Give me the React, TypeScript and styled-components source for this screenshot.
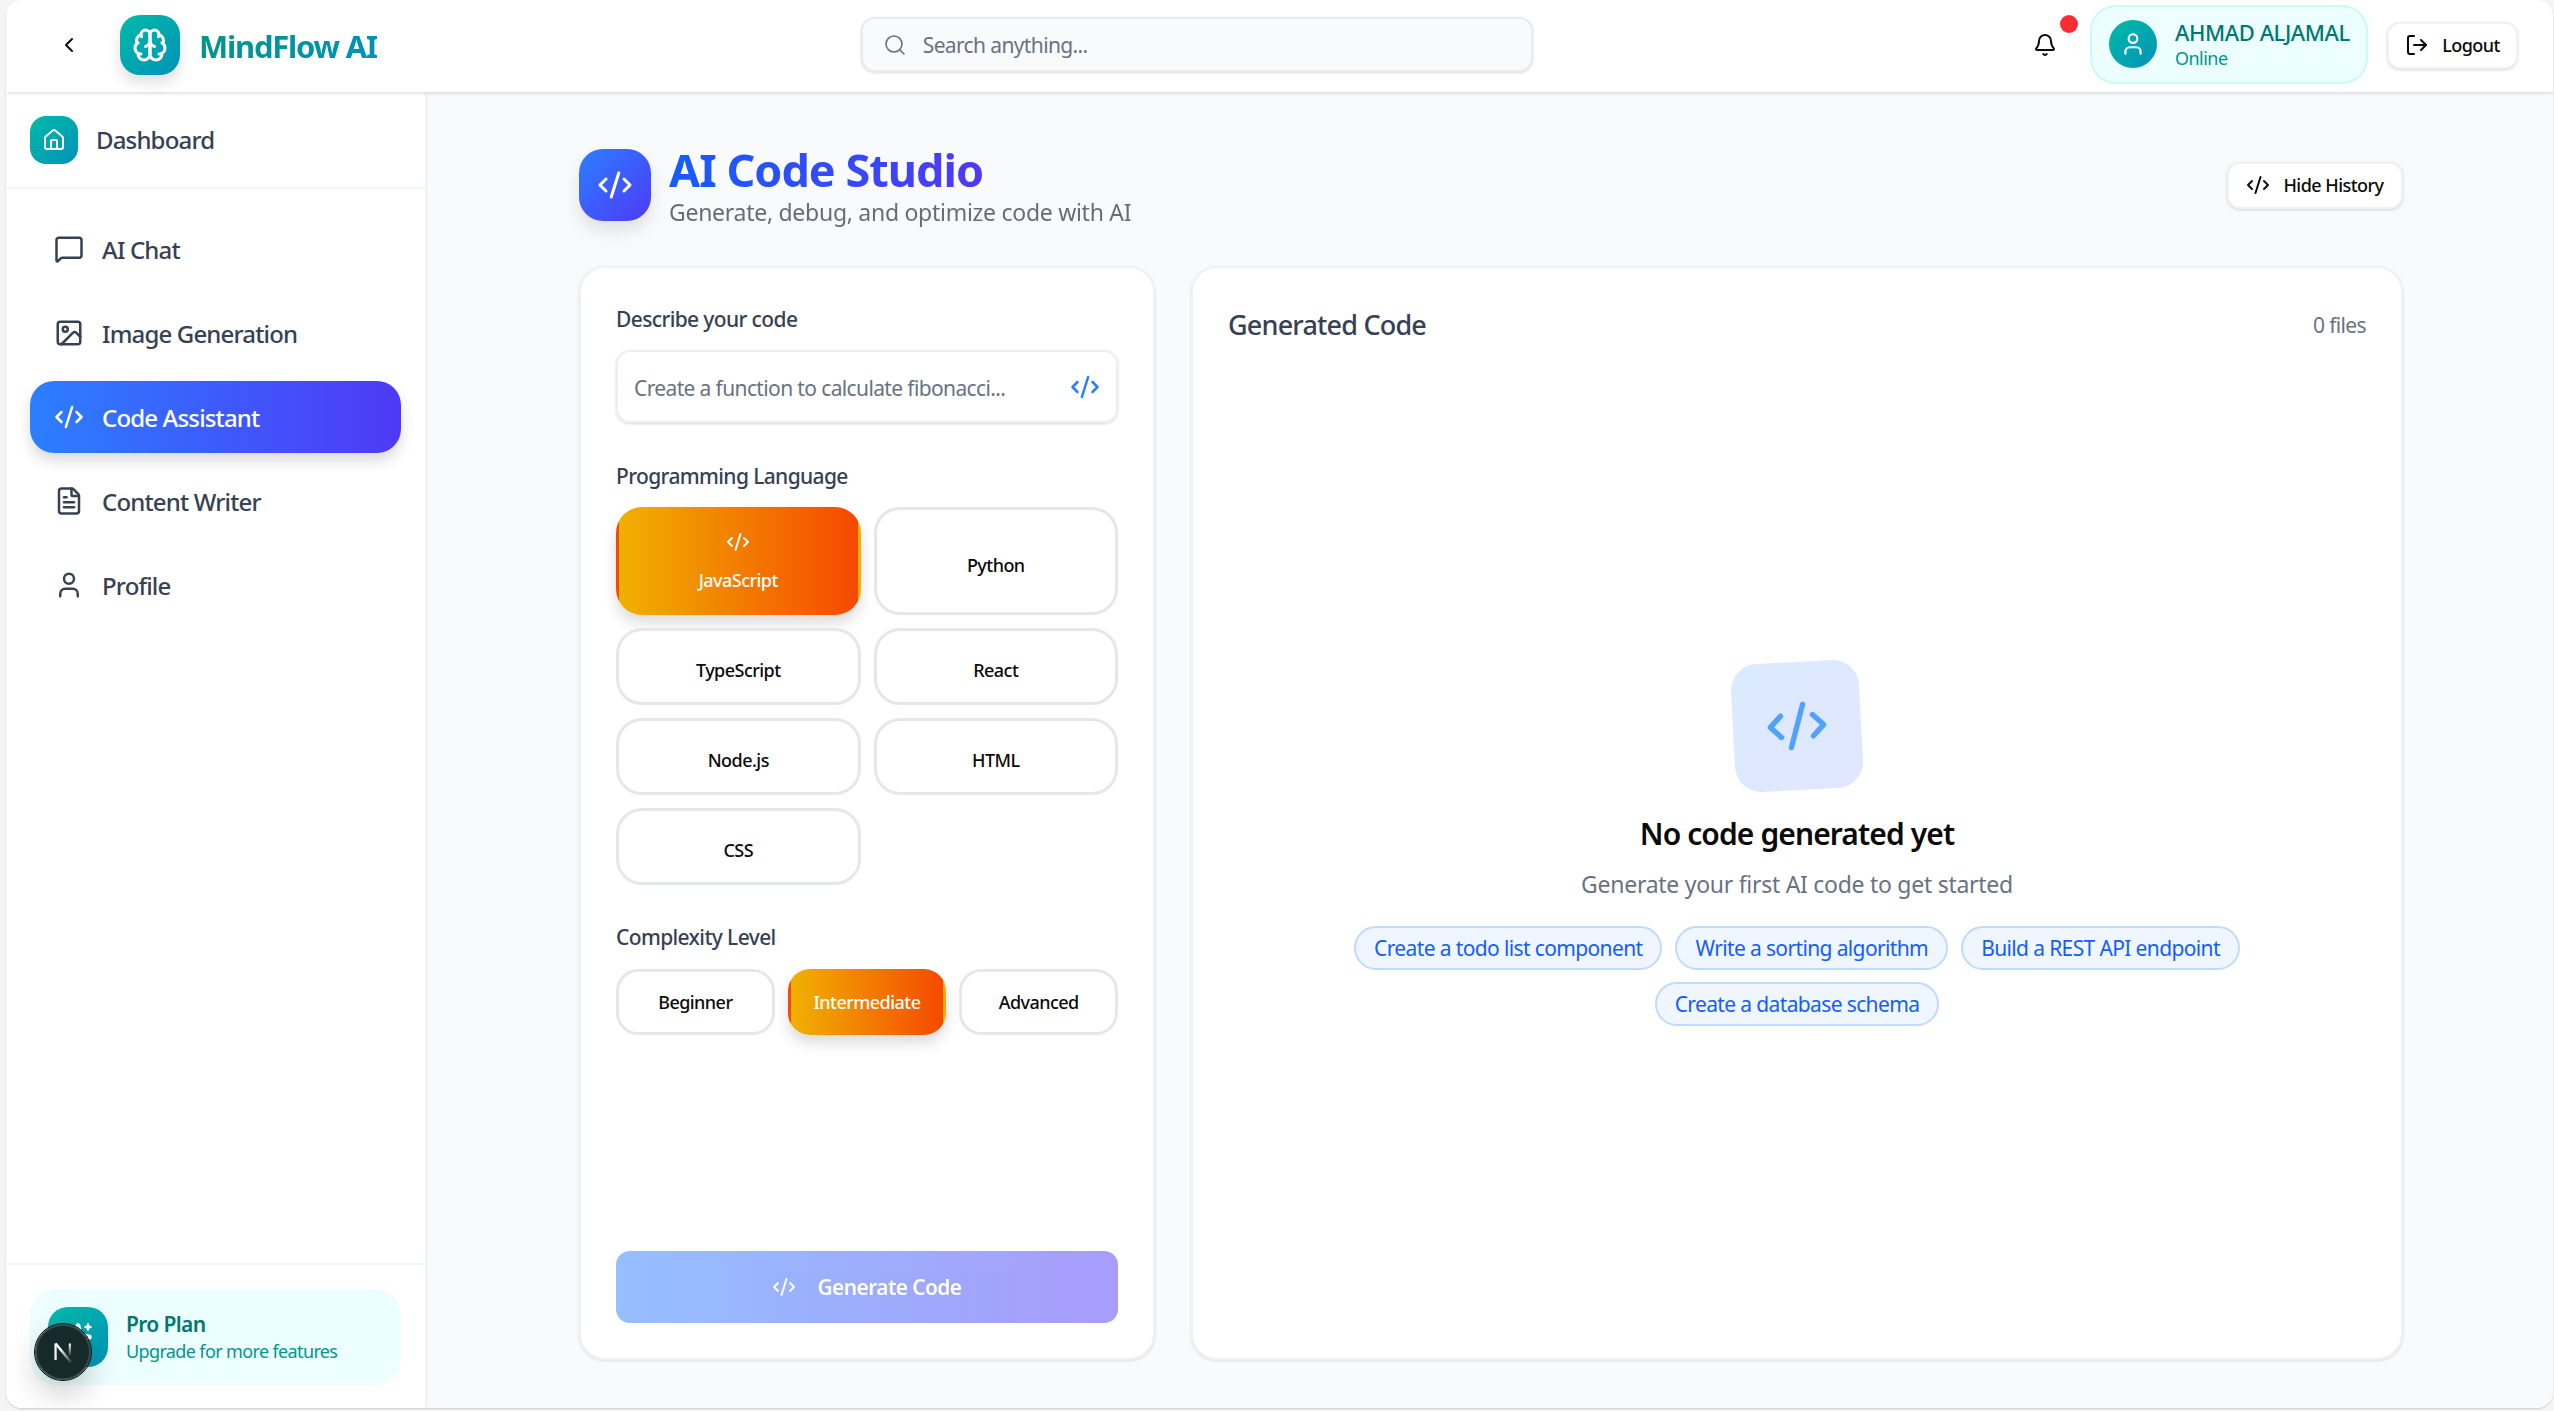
import React from "react";
import styled, { createGlobalStyle } from "styled-components";
import {
  Bell,
  ChevronLeft,
  CodeXml,
  FileText,
  House,
  Image as ImageIcon,
  LogOut,
  MessageSquare,
  Search,
  Sparkles,
  User,
} from "lucide-react";

const GlobalStyle = createGlobalStyle`
  * { box-sizing: border-box; letter-spacing: -0.03em; }
  html, body { margin: 0; padding: 0; height: 100%; background: #f5f5f5; }
  body { font-family: "Noto Sans", "Liberation Sans", sans-serif; overflow: hidden; }
`;

const tealGradient = "linear-gradient(135deg, #00bba7, #0092b8)";
const blueGradient = "linear-gradient(135deg, #2b7fff, #4f39f6)";
const orangeGradient = "linear-gradient(90deg, #f0b100, #f54900)";

const Shell = styled.div`
  margin: 0 1px 0 6px;
  height: 1408px;
  display: flex;
  flex-direction: column;
  background: #fff;
  border-radius: 16px;
  overflow: hidden;
  box-shadow: 0 1px 2px rgba(0, 0, 0, 0.18);
`;

const Header = styled.header`
  height: 92px;
  flex: none;
  display: flex;
  align-items: center;
  padding: 0 35px 0 51px;
  background: #fff;
  box-shadow: 0 1px 4px rgba(0, 0, 0, 0.16);
  position: relative;
  z-index: 2;
`;

const BackButton = styled.div`
  width: 24px;
  display: flex;
  justify-content: center;
  color: #0a0a0a;
  margin: -3px 39px 0 0;
`;

const LogoTile = styled.div`
  width: 60px;
  height: 60px;
  margin-top: -3px;
  border-radius: 20px;
  background: ${tealGradient};
  color: #fff;
  display: flex;
  align-items: center;
  justify-content: center;
  box-shadow: 0 8px 14px rgba(0, 0, 0, 0.12);
`;

const LogoText = styled.div`
  margin-left: 19px;
  width: max-content;
  font-size: 31px;
  font-weight: 700;
  letter-spacing: -0.04em;
  white-space: nowrap;
  background: linear-gradient(90deg, #009689, #0092b8);
  -webkit-background-clip: text;
  background-clip: text;
  color: transparent;
`;

const SearchBox = styled.div`
  margin: -3px 0 0 484px;
  width: 672px;
  height: 55px;
  display: flex;
  align-items: center;
  gap: 16px;
  padding: 0 20px;
  border: 2px solid #e9ebee;
  border-radius: 14px;
  background: #f9fafb;
  box-shadow: 0 1px 3px rgba(0, 0, 0, 0.14);
  color: #6a7282;
  font-size: 21px;
  span {
    white-space: nowrap;
  }
`;

const HeaderRight = styled.div`
  margin-left: auto;
  display: flex;
  align-items: center;
`;

const BellWrap = styled.div`
  position: relative;
  width: 24px;
  height: 28px;
  margin: -3px 33px 0 0;
  color: #0a0a0a;
  display: flex;
  align-items: center;
  justify-content: center;
`;

const RedDot = styled.span`
  position: absolute;
  top: -16px;
  right: -21px;
  width: 18px;
  height: 18px;
  border-radius: 50%;
  background: #fb2c36;
`;

const UserPill = styled.div`
  width: 278px;
  height: 79px;
  margin-top: -4px;
  display: flex;
  align-items: center;
  gap: 18px;
  padding-left: 17px;
  border: 2px solid #cbfbf1;
  border-radius: 26px;
  background: #ecfeff;
`;

const Avatar = styled.div`
  width: 48px;
  height: 48px;
  flex: none;
  border-radius: 50%;
  background: ${tealGradient};
  color: #fff;
  display: flex;
  align-items: center;
  justify-content: center;
`;

const UserName = styled.div`
  font-size: 22px;
  line-height: 28px;
  color: #00786f;
  white-space: nowrap;
  font-weight: 500;
  letter-spacing: -0.02em;
`;

const UserStatus = styled.div`
  font-size: 18px;
  line-height: 24px;
  color: #009689;
`;

const GhostButton = styled.div`
  height: 47px;
  display: flex;
  align-items: center;
  justify-content: center;
  gap: 13px;
  background: #fff;
  border: 2px solid #f0f1f3;
  border-radius: 13px;
  box-shadow: 0 1px 3px rgba(0, 0, 0, 0.16);
  color: #0a0a0a;
  font-size: 18px;
  font-weight: 500;
  white-space: nowrap;
`;

const LogoutButton = styled(GhostButton)`
  width: 131px;
  margin: -2px 0 0 19px;
`;

const HistoryButton = styled(GhostButton)`
  width: 176px;
`;

const Body = styled.div`
  flex: 1;
  min-height: 0;
  display: flex;
`;

const Sidebar = styled.aside`
  width: 420px;
  flex: none;
  display: flex;
  flex-direction: column;
  background: #fff;
  border-right: 1px solid #f0f1f3;
  box-shadow: 1px 0 3px rgba(0, 0, 0, 0.04);
  position: relative;
`;

const DashboardRow = styled.div`
  height: 97px;
  display: flex;
  align-items: center;
  gap: 18px;
  padding: 0 24px;
  border-bottom: 2px solid #f3f4f6;
  color: #364153;
  font-size: 24px;
  font-weight: 500;
  letter-spacing: -0.035em;
`;

const DashboardIcon = styled.div`
  width: 48px;
  height: 48px;
  border-radius: 16px;
  background: ${tealGradient};
  color: #fff;
  display: flex;
  align-items: center;
  justify-content: center;
`;

const Nav = styled.nav`
  flex: 1;
  display: flex;
  flex-direction: column;
  gap: 12px;
  padding: 24px 24px 0;
`;

const NavItem = styled.div<{ $active?: boolean }>`
  height: 72px;
  display: flex;
  align-items: center;
  gap: 18px;
  padding: 0 24px;
  border-radius: 24px;
  font-size: 24px;
  font-weight: 500;
  letter-spacing: -0.035em;
  color: ${(p) => (p.$active ? "#fff" : "#364153")};
  background: ${(p) => (p.$active ? "linear-gradient(90deg, #2b7fff, #4f39f6)" : "transparent")};
  box-shadow: ${(p) => (p.$active ? "0 8px 14px rgba(0, 0, 0, 0.14)" : "none")};
`;

const SidebarFooter = styled.div`
  height: 145px;
  flex: none;
  padding: 24px 24px 0;
  border-top: 2px solid #f3f4f6;
`;

const ProCard = styled.div`
  height: 96px;
  display: flex;
  align-items: center;
  gap: 18px;
  padding: 0 18px;
  border-radius: 26px;
  background: #ecfeff;
`;

const ProIcon = styled.div`
  width: 60px;
  height: 60px;
  flex: none;
  border-radius: 20px;
  background: ${tealGradient};
  color: #fff;
  display: flex;
  align-items: center;
  justify-content: center;
`;

const ProTitle = styled.div`
  font-size: 21px;
  line-height: 28px;
  font-weight: 600;
  color: #00786f;
`;

const ProText = styled.div`
  font-size: 18px;
  line-height: 26px;
  color: #009689;
  white-space: nowrap;
  letter-spacing: -0.035em;
`;

const DevBadge = styled.div`
  position: absolute;
  left: 29px;
  bottom: 28px;
  width: 56px;
  height: 56px;
  border-radius: 50%;
  background: #172a2b;
  border: 2px solid #3b4a4b;
  outline: 1px solid #111;
  display: flex;
  align-items: center;
  justify-content: center;
  box-shadow: 0 14px 30px rgba(0, 0, 0, 0.2);
`;

const Main = styled.main`
  flex: 1;
  min-width: 0;
  background: #f9fafb;
  padding: 57px 0 0 153px;
`;

const Content = styled.div`
  width: 1824px;
`;

const PageHead = styled.div`
  height: 72px;
  display: flex;
  align-items: center;
  gap: 18px;
  margin-bottom: 45px;
`;

const PageIcon = styled.div`
  width: 72px;
  height: 72px;
  flex: none;
  border-radius: 24px;
  background: ${blueGradient};
  color: #fff;
  display: flex;
  align-items: center;
  justify-content: center;
  box-shadow: 0 10px 18px rgba(0, 0, 0, 0.1);
`;

const PageTitles = styled.div`
  flex: 1;
`;

const PageTitle = styled.h1`
  margin: 2px 0 0;
  font-size: 45px;
  line-height: 52px;
  font-weight: 700;
  letter-spacing: -0.022em;
  width: max-content;
  background: linear-gradient(90deg, #155dfc, #4f39f6);
  -webkit-background-clip: text;
  background-clip: text;
  color: transparent;
`;

const PageSub = styled.div`
  font-size: 23px;
  line-height: 32px;
  color: #4a5565;
  opacity: 0.85;
  letter-spacing: -0.012em;
`;

const Columns = styled.div`
  display: grid;
  grid-template-columns: 576px 1212px;
  gap: 36px;
  height: 1094px;
`;

const Card = styled.section`
  display: flex;
  flex-direction: column;
  background: #fff;
  border: 2px solid #f0f1f3;
  border-radius: 26px;
  box-shadow: 0 1px 3px rgba(0, 0, 0, 0.12);
  padding: 37px 35px 35px;
`;

const FieldLabel = styled.div`
  font-size: 21px;
  line-height: 28px;
  font-weight: 500;
  color: #364153;
  margin-bottom: 17px;
`;

const PromptBox = styled.div`
  height: 73px;
  display: flex;
  align-items: center;
  justify-content: space-between;
  padding: 0 16px;
  margin-bottom: 39px;
  border: 2px solid #eceef1;
  border-radius: 14px;
  box-shadow: 0 1px 3px rgba(0, 0, 0, 0.16);
  color: #6a7282;
  font-size: 21px;
  span {
    margin-top: 2px;
  }
  svg {
    color: #2b7fff;
  }
`;

const LanguageGrid = styled.div`
  display: grid;
  grid-template-columns: 1fr 1fr;
  gap: 13px;
  margin-bottom: 38px;
`;

const OptionButton = styled.div<{ $active?: boolean; $tall?: boolean }>`
  min-height: ${(p) => (p.$tall ? "108px" : "77px")};
  display: flex;
  flex-direction: column;
  align-items: center;
  justify-content: center;
  gap: 14px;
  padding-top: ${(p) => (p.$active ? "0" : "7px")};
  border: 3px solid ${(p) => (p.$active ? "transparent" : "#e5e7eb")};
  border-radius: 26px;
  background: ${(p) => (p.$active ? orangeGradient : "#fff")};
  color: ${(p) => (p.$active ? "#fff" : "#0a0a0a")};
  box-shadow: ${(p) => (p.$active ? "0 8px 14px rgba(0, 0, 0, 0.14)" : "none")};
  font-size: 18px;
  font-weight: 500;
`;

const LevelRow = styled.div`
  margin-top: 1px;
  display: grid;
  grid-template-columns: repeat(3, 1fr);
  gap: 13px;
`;

const LevelButton = styled(OptionButton)`
  min-height: 66px;
  padding-top: 0;
  border-radius: 22px;
`;

const GenerateButton = styled.div`
  height: 72px;
  margin-top: auto;
  display: flex;
  align-items: center;
  justify-content: center;
  gap: 21px;
  border-radius: 14px;
  background: linear-gradient(90deg, #2b7fff, #4f39f6);
  opacity: 0.5;
  color: #fff;
  font-size: 21px;
  font-weight: 600;
`;

const ResultHead = styled.div`
  display: flex;
  align-items: center;
  justify-content: space-between;
  margin-top: 2px;
`;

const ResultTitle = styled.h2`
  margin: 0;
  font-size: 27px;
  line-height: 36px;
  font-weight: 500;
  color: #364153;
`;

const FileCount = styled.div`
  font-size: 21px;
  color: #6a7282;
`;

const Empty = styled.div`
  flex: 1;
  display: flex;
  flex-direction: column;
  align-items: center;
  justify-content: center;
  padding-top: 22px;
`;

const EmptyIcon = styled.div`
  width: 128px;
  height: 128px;
  border-radius: 26px;
  background: linear-gradient(135deg, #dbeafe, #e0e7ff);
  color: #51a2ff;
  transform: rotate(-3deg);
  display: flex;
  align-items: center;
  justify-content: center;
  margin-bottom: 22px;
`;

const EmptyTitle = styled.h3`
  margin: 0 0 10px;
  font-size: 30px;
  line-height: 44px;
  font-weight: 600;
  color: #0a0a0a;
`;

const EmptyText = styled.p`
  margin: 0 0 24px;
  font-size: 23px;
  line-height: 36px;
  color: #6a7282;
  letter-spacing: -0.012em;
`;

const ChipRow = styled.div`
  width: 900px;
  display: flex;
  flex-wrap: wrap;
  justify-content: center;
  gap: 12px 13px;
`;

const Chip = styled.div`
  height: 44px;
  display: flex;
  align-items: center;
  padding: 0 18px;
  border: 2px solid #bedbff;
  border-radius: 22px;
  background: #eff6ff;
  color: #155dfc;
  font-size: 21px;
  white-space: nowrap;
`;

const navItems = [
  { label: "AI Chat", icon: MessageSquare },
  { label: "Image Generation", icon: ImageIcon },
  { label: "Code Assistant", icon: CodeXml, active: true },
  { label: "Content Writer", icon: FileText },
  { label: "Profile", icon: User },
];

const languages = ["JavaScript", "Python", "TypeScript", "React", "Node.js", "HTML", "CSS"];
const levels = ["Beginner", "Intermediate", "Advanced"];
const suggestions = [
  "Create a todo list component",
  "Write a sorting algorithm",
  "Build a REST API endpoint",
  "Create a database schema",
];

// the brain with the arrow in the middle, newer lucide versions dropped it
const BrainMark = () => (
  <svg width="36" height="36" viewBox="0 0 24 24" fill="none" stroke="currentColor" strokeWidth="2" strokeLinecap="round" strokeLinejoin="round">
    <path d="M12 5a3 3 0 1 0-5.997.125 4 4 0 0 0-2.526 5.77 4 4 0 0 0 .556 6.588A4 4 0 1 0 12 18Z" />
    <path d="M12 5a3 3 0 1 1 5.997.125 4 4 0 0 1 2.526 5.77 4 4 0 0 1-.556 6.588A4 4 0 1 1 12 18Z" />
    <path d="M15 13a4.5 4.5 0 0 1-3-4 4.5 4.5 0 0 1-3 4" />
    <path d="M17.599 6.5a3 3 0 0 0 .399-1.375" />
    <path d="M6.003 5.125A3 3 0 0 0 6.401 6.5" />
    <path d="M3.477 10.896a4 4 0 0 1 .585-.396" />
    <path d="M19.938 10.5a4 4 0 0 1 .585.396" />
    <path d="M6 18a4 4 0 0 1-1.967-.516" />
    <path d="M19.967 17.484A4 4 0 0 1 18 18" />
  </svg>
);

const NextMark = () => (
  <svg width="32" height="32" viewBox="0 0 28 28" fill="none">
    <defs>
      <linearGradient id="nextDiagonal" x1="8" y1="6" x2="22" y2="24" gradientUnits="userSpaceOnUse">
        <stop offset="0.3" stopColor="#fff" />
        <stop offset="1" stopColor="#fff" stopOpacity="0" />
      </linearGradient>
      <linearGradient id="nextStem" x1="20" y1="6" x2="20" y2="18" gradientUnits="userSpaceOnUse">
        <stop stopColor="#fff" />
        <stop offset="1" stopColor="#fff" stopOpacity="0" />
      </linearGradient>
    </defs>
    <path d="M7.5 6.5V21" stroke="#f2f2f2" strokeWidth="2" />
    <path d="M7.5 6.5 21 23" stroke="url(#nextDiagonal)" strokeWidth="2.2" />
    <path d="M20 6.5V18" stroke="url(#nextStem)" strokeWidth="2" />
  </svg>
);

export default function App() {
  return (
    <>
      <GlobalStyle />
      <Shell>
        <Header>
          <BackButton>
            <ChevronLeft size={24} />
          </BackButton>
          <LogoTile>
            <BrainMark />
          </LogoTile>
          <LogoText>MindFlow AI</LogoText>
          <SearchBox>
            <Search size={24} strokeWidth={1.6} />
            <span>Search anything...</span>
          </SearchBox>
          <HeaderRight>
            <BellWrap>
              <Bell size={26} />
              <RedDot />
            </BellWrap>
            <UserPill>
              <Avatar>
                <User size={26} />
              </Avatar>
              <div>
                <UserName>AHMAD ALJAMAL</UserName>
                <UserStatus>Online</UserStatus>
              </div>
            </UserPill>
            <LogoutButton>
              <LogOut size={24} />
              Logout
            </LogoutButton>
          </HeaderRight>
        </Header>
        <Body>
          <Sidebar>
            <DashboardRow>
              <DashboardIcon>
                <House size={24} />
              </DashboardIcon>
              Dashboard
            </DashboardRow>
            <Nav>
              {navItems.map((item) => (
                <NavItem key={item.label} $active={item.active}>
                  <item.icon size={30} strokeWidth={2} />
                  {item.label}
                </NavItem>
              ))}
            </Nav>
            <SidebarFooter>
              <ProCard>
                <ProIcon>
                  <Sparkles size={30} />
                </ProIcon>
                <div>
                  <ProTitle>Pro Plan</ProTitle>
                  <ProText>Upgrade for more features</ProText>
                </div>
              </ProCard>
            </SidebarFooter>
            <DevBadge>
              <NextMark />
            </DevBadge>
          </Sidebar>
          <Main>
            <Content>
              <PageHead>
                <PageIcon>
                  <CodeXml size={36} />
                </PageIcon>
                <PageTitles>
                  <PageTitle>AI Code Studio</PageTitle>
                  <PageSub>Generate, debug, and optimize code with AI</PageSub>
                </PageTitles>
                <HistoryButton>
                  <CodeXml size={24} />
                  Hide History
                </HistoryButton>
              </PageHead>
              <Columns>
                <Card>
                  <FieldLabel>Describe your code</FieldLabel>
                  <PromptBox>
                    <span>Create a function to calculate fibonacci...</span>
                    <CodeXml size={30} />
                  </PromptBox>
                  <FieldLabel>Programming Language</FieldLabel>
                  <LanguageGrid>
                    {languages.map((lang, i) => (
                      <OptionButton key={lang} $active={i === 0} $tall={i < 2}>
                        {i === 0 && <CodeXml size={24} />}
                        {lang}
                      </OptionButton>
                    ))}
                  </LanguageGrid>
                  <FieldLabel>Complexity Level</FieldLabel>
                  <LevelRow>
                    {levels.map((level) => (
                      <LevelButton key={level} $active={level === "Intermediate"}>
                        {level}
                      </LevelButton>
                    ))}
                  </LevelRow>
                  <GenerateButton>
                    <CodeXml size={24} />
                    Generate Code
                  </GenerateButton>
                </Card>
                <Card>
                  <ResultHead>
                    <ResultTitle>Generated Code</ResultTitle>
                    <FileCount>0 files</FileCount>
                  </ResultHead>
                  <Empty>
                    <EmptyIcon>
                      <CodeXml size={64} />
                    </EmptyIcon>
                    <EmptyTitle>No code generated yet</EmptyTitle>
                    <EmptyText>Generate your first AI code to get started</EmptyText>
                    <ChipRow>
                      {suggestions.map((s) => (
                        <Chip key={s}>{s}</Chip>
                      ))}
                    </ChipRow>
                  </Empty>
                </Card>
              </Columns>
            </Content>
          </Main>
        </Body>
      </Shell>
    </>
  );
}
